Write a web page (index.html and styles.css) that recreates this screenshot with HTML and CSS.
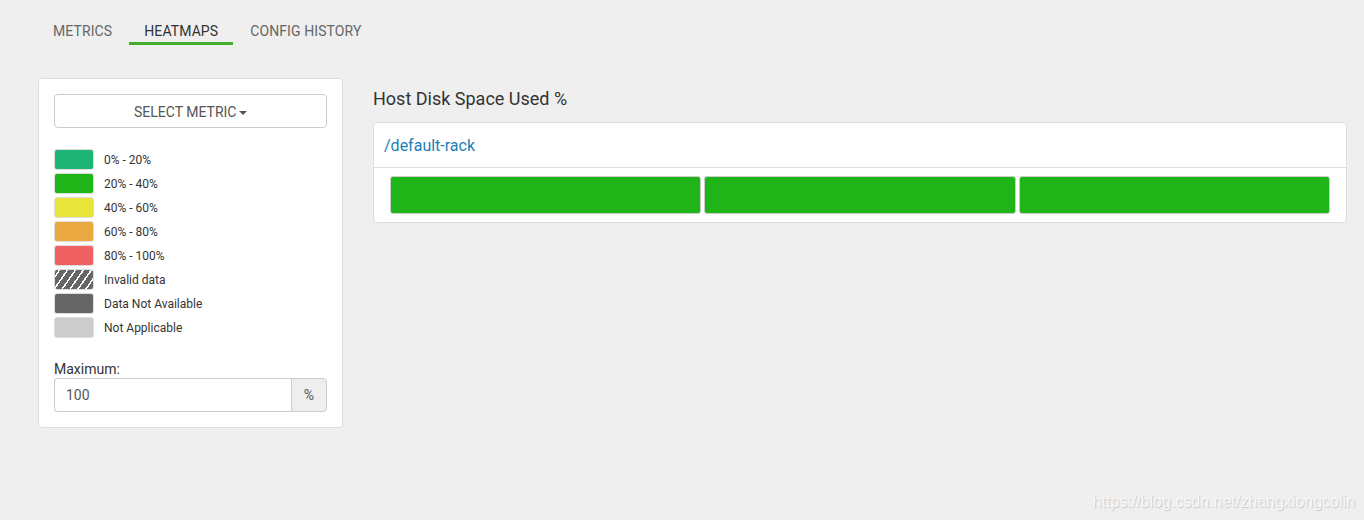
FILE: index.html
```html
<!DOCTYPE html>
<html>
<head>
<meta charset="utf-8">
<link rel="stylesheet" href="styles.css">
</head>
<body>
<div class="page">
  <ul class="tabs">
    <li class="tab">METRICS</li>
    <li class="tab active">HEATMAPS</li>
    <li class="tab">CONFIG HISTORY</li>
  </ul>
  <div class="content">
    <div class="side-card">
      <button class="select-btn">SELECT METRIC <span class="caret"></span></button>
      <ul class="legend">
        <li><span class="swatch c1"></span>0% - 20%</li>
        <li><span class="swatch c2"></span>20% - 40%</li>
        <li><span class="swatch c3"></span>40% - 60%</li>
        <li><span class="swatch c4"></span>60% - 80%</li>
        <li><span class="swatch c5"></span>80% - 100%</li>
        <li><span class="swatch invalid"></span>Invalid data</li>
        <li><span class="swatch na"></span>Data Not Available</li>
        <li><span class="swatch notapp"></span>Not Applicable</li>
      </ul>
      <label class="max-label">Maximum:</label>
      <div class="input-group">
        <input class="max-input" type="text" value="100">
        <span class="addon">%</span>
      </div>
    </div>
    <div class="main">
      <h2 class="title">Host Disk Space Used %</h2>
      <div class="panel">
        <div class="panel-head"><a class="rack-link">/default-rack</a></div>
        <div class="panel-body">
          <div class="host"></div>
          <div class="host"></div>
          <div class="host"></div>
        </div>
      </div>
    </div>
  </div>
</div>
<div class="watermark">https://blog.csdn.net/zhangxiongcolin</div>
</body>
</html>
```
FILE: styles.css
```css
* { box-sizing: border-box; }
html, body { margin: 0; padding: 0; }
body {
  background: #efefef;
  font-family: Roboto, "Liberation Sans", Arial, sans-serif;
  color: #333;
  width: 1364px;
  height: 520px;
  overflow: hidden;
  position: relative;
}
.page { padding: 11px 17px 0 38px; }
.tabs {
  list-style: none;
  margin: 0;
  padding: 0;
  display: flex;
  gap: 2px;
}
.tab {
  font-size: 14px;
  line-height: 20px;
  padding: 10px 15px 1px;
  border-bottom: 3px solid transparent;
  color: #666;
  letter-spacing: 0.1px;
}
.tab.active { color: #333; border-bottom-color: #3fae2a; }
.content {
  display: flex;
  align-items: flex-start;
  gap: 30px;
  margin-top: 33px;
}
.side-card {
  width: 305px;
  flex: none;
  background: #fff;
  border: 1px solid #ddd;
  border-radius: 4px;
  padding: 15px;
}
.select-btn {
  width: 273px;
  height: 34px;
  display: block;
  background: #fff;
  border: 1px solid #ccc;
  border-radius: 4px;
  font-family: inherit;
  font-size: 14px;
  color: #555;
  padding: 2px 0 0;
}
.caret {
  display: inline-block;
  width: 0; height: 0;
  border-left: 4px solid transparent;
  border-right: 4px solid transparent;
  border-top: 4px solid #555;
  vertical-align: middle;
  margin-left: -1px;
}
.legend {
  list-style: none;
  margin: 21px 0 0;
  padding: 0;
  display: flex;
  flex-direction: column;
  gap: 3px;
}
.legend li {
  display: flex;
  align-items: center;
  font-size: 12px;
  color: #333;
  height: 21px;
  padding-top: 1px;
}
.swatch {
  width: 40px;
  height: 21px;
  border-radius: 3px;
  border: 1px solid #ddd;
  margin-right: 10px;
  flex: none;
  margin-top: -1px;
}
.c1 { background: #1eb475; }
.c2 { background: #1fb418; }
.c3 { background: #e8e53a; }
.c4 { background: #e9a840; }
.c5 { background: #ef6162; }
.na { background: #666; }
.notapp { background: #ccc; }
.invalid {
  background: repeating-linear-gradient(-55deg, #666 0 5px, #fff 5px 6.5px);
}
.max-label {
  display: block;
  margin-top: 22px;
  font-size: 14px;
  line-height: 18px;
  color: #333;
}
.input-group {
  display: flex;
  height: 34px;
  width: 273px;
}
.max-input {
  flex: 1;
  min-width: 0;
  height: 34px;
  border: 1px solid #ccc;
  border-right: none;
  border-radius: 4px 0 0 4px;
  font-family: inherit;
  font-size: 14px;
  color: #555;
  padding: 0 11px;
  outline: none;
}
.addon {
  width: 36px;
  flex: none;
  background: #eee;
  border: 1px solid #ccc;
  border-radius: 0 4px 4px 0;
  font-size: 14px;
  color: #555;
  display: flex;
  align-items: center;
  justify-content: center;
}
.main { flex: 1; }
.title {
  margin: 8px 0 0;
  font-size: 18px;
  font-weight: normal;
  line-height: 26px;
  color: #333;
}
.panel {
  margin-top: 10px;
  background: #fff;
  border: 1px solid #ddd;
  border-radius: 4px;
}
.panel-head {
  padding: 1px 10px 0;
  height: 45px;
  display: flex;
  align-items: center;
  border-bottom: 1px solid #ddd;
}
.rack-link { color: #1a7fb8; font-size: 16px; }
.panel-body {
  display: flex;
  gap: 3px;
  padding: 8px 16px 8px 16px;
}
.host {
  flex: 1;
  height: 38px;
  background: #1fb418;
  border: 1px solid #ccc;
  border-radius: 3px;
}
.watermark {
  position: absolute;
  right: 9px;
  bottom: 9px;
  font-family: "Liberation Sans", Arial, sans-serif;
  font-size: 16px;
  line-height: 18px;
  color: #f7f7f7;
  text-shadow: 1px 1px 1px #c8c8c8;
}
```
